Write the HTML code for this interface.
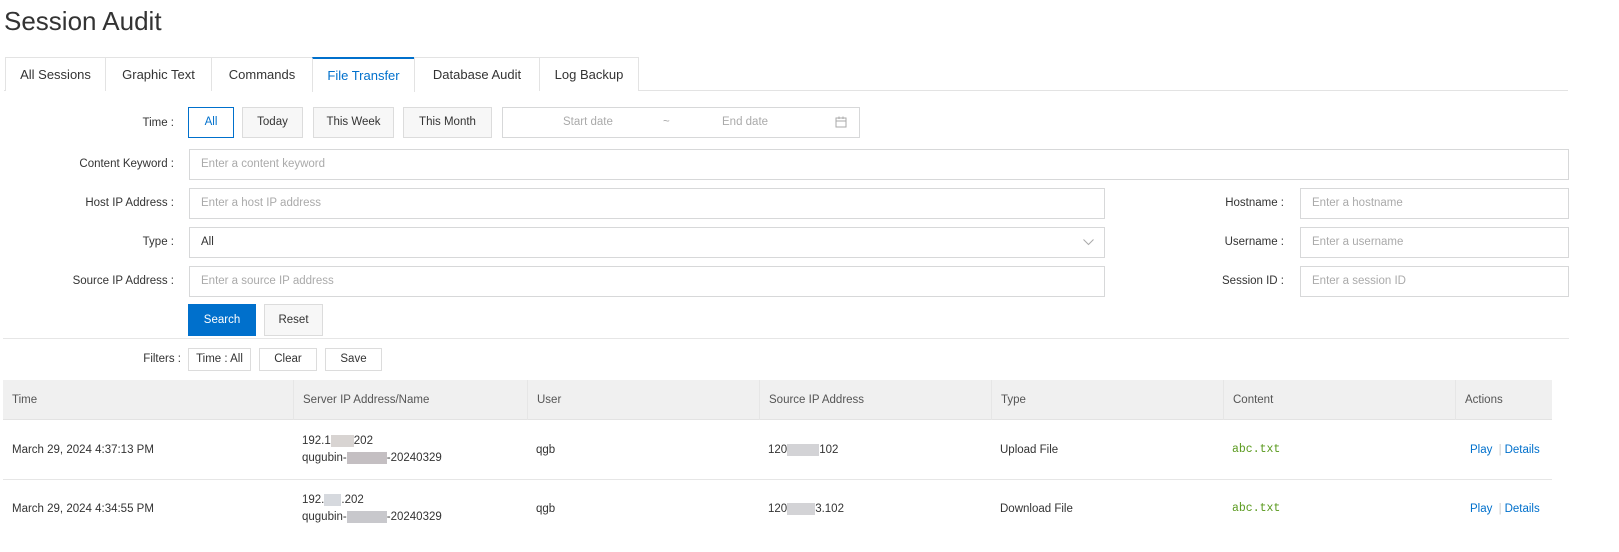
<!DOCTYPE html>
<html><head><meta charset="utf-8"><style>
*{box-sizing:border-box;margin:0;padding:0}
body{width:1619px;height:552px;background:#fff;font-family:"Liberation Sans",sans-serif;font-size:11.5px;color:#333;position:relative;overflow:hidden}
.a{position:absolute}
.lbl{position:absolute;text-align:right;color:#333;font-size:11.5px}
.btn{position:absolute;border:1px solid #dcdcdc;background:#f7f7f7;text-align:center;font-size:11.5px;color:#333}
.inp{position:absolute;border:1px solid #d7d8d9;background:#fff;color:#aaa;font-size:11.5px;padding-left:11px}
.tab{position:absolute;top:57px;height:34px;border:1px solid #e3e3e3;border-bottom:none;line-height:34px;text-align:center;font-size:13px;color:#333;background:#fff}
.th{position:absolute;top:380px;height:40px;line-height:40px;color:#555;padding-left:9px;border-left:1px solid #e6e6e6}
.td{position:absolute;color:#333}
.blur{display:inline-block;height:12px;vertical-align:middle;background:#cfcfd2}
</style></head><body>
<div class="a" style="left:4px;top:6px;font-size:26px;color:#333">Session Audit</div>
<div class="a" style="left:4px;top:90px;width:1564px;height:1px;background:#e3e3e3"></div>
<div class="tab" style="left:5px;width:101px">All Sessions</div>
<div class="tab" style="left:105px;width:107px">Graphic Text</div>
<div class="tab" style="left:211px;width:102px">Commands</div>
<div class="tab" style="left:312px;width:103px;border-top:2px solid #0070cc;color:#0070cc;height:35px">File Transfer</div>
<div class="tab" style="left:414px;width:126px">Database Audit</div>
<div class="tab" style="left:539px;width:100px">Log Backup</div>

<div class="lbl" style="left:0;width:174px;top:117px">Time :</div>
<div class="btn" style="left:188px;top:107px;width:46px;height:31px;line-height:29px;border-color:#0070cc;background:#fff;color:#0070cc">All</div>
<div class="btn" style="left:242px;top:107px;width:61px;height:31px;line-height:29px">Today</div>
<div class="btn" style="left:313px;top:107px;width:81px;height:31px;line-height:29px">This Week</div>
<div class="btn" style="left:403px;top:107px;width:89px;height:31px;line-height:29px">This Month</div>
<div class="inp" style="left:502px;top:107px;width:358px;height:31px;line-height:29px;padding:0">
<span class="a" style="left:60px">Start date</span><span class="a" style="left:160px">~</span><span class="a" style="left:219px">End date</span>
<svg class="a" style="left:332px;top:8px" width="12" height="12" viewBox="0 0 12 12"><rect x="1" y="2" width="10" height="9" fill="none" stroke="#aaa"/><line x1="1" y1="5" x2="11" y2="5" stroke="#aaa"/><line x1="4" y1="0.5" x2="4" y2="3" stroke="#aaa"/><line x1="8" y1="0.5" x2="8" y2="3" stroke="#aaa"/></svg></div>

<div class="lbl" style="left:0;width:174px;top:158px">Content Keyword :</div>
<div class="inp" style="left:189px;top:149px;width:1380px;height:31px;line-height:29px">Enter a content keyword</div>

<div class="lbl" style="left:0;width:174px;top:197px">Host IP Address :</div>
<div class="inp" style="left:189px;top:188px;width:916px;height:31px;line-height:29px">Enter a host IP address</div>
<div class="lbl" style="left:1150px;width:134px;top:197px">Hostname :</div>
<div class="inp" style="left:1300px;top:188px;width:269px;height:31px;line-height:29px">Enter a hostname</div>

<div class="lbl" style="left:0;width:174px;top:236px">Type :</div>
<div class="inp" style="left:189px;top:227px;width:916px;height:31px;line-height:29px;color:#333">All
<svg class="a" style="left:893px;top:11px" width="11" height="7" viewBox="0 0 11 7"><polyline points="0.5,0.5 5.5,5.5 10.5,0.5" fill="none" stroke="#aaa"/></svg></div>
<div class="lbl" style="left:1150px;width:134px;top:236px">Username :</div>
<div class="inp" style="left:1300px;top:227px;width:269px;height:31px;line-height:29px">Enter a username</div>

<div class="lbl" style="left:0;width:174px;top:275px">Source IP Address :</div>
<div class="inp" style="left:189px;top:266px;width:916px;height:31px;line-height:29px">Enter a source IP address</div>
<div class="lbl" style="left:1150px;width:134px;top:275px">Session ID :</div>
<div class="inp" style="left:1300px;top:266px;width:269px;height:31px;line-height:29px">Enter a session ID</div>

<div class="btn" style="left:188px;top:304px;width:68px;height:32px;line-height:32px;background:#0070cc;border:none;color:#fff">Search</div>
<div class="btn" style="left:264px;top:304px;width:59px;height:32px;line-height:30px">Reset</div>
<div class="a" style="left:3px;top:338px;width:1566px;height:1px;background:#e6e6e6"></div>

<div class="lbl" style="left:0;width:181px;top:353px">Filters :</div>
<div class="btn" style="left:188px;top:348px;width:63px;height:23px;line-height:21px;background:#fff">Time : All</div>
<div class="btn" style="left:259px;top:348px;width:58px;height:23px;line-height:21px;background:#fff">Clear</div>
<div class="btn" style="left:325px;top:348px;width:57px;height:23px;line-height:21px;background:#fff">Save</div>

<div class="a" style="left:3px;top:380px;width:1549px;height:40px;background:#f0f0f0;border-bottom:1px solid #e3e3e3"></div>
<div class="th" style="left:3px;border:none">Time</div>
<div class="th" style="left:293px">Server IP Address/Name</div>
<div class="th" style="left:527px">User</div>
<div class="th" style="left:759px">Source IP Address</div>
<div class="th" style="left:991px">Type</div>
<div class="th" style="left:1223px">Content</div>
<div class="th" style="left:1455px">Actions</div>
<div class="a" style="left:3px;top:479px;width:1549px;height:1px;background:#e6e6e6"></div>

<div class="td" style="left:12px;top:444px">March 29, 2024 4:37:13 PM</div>
<div class="td" style="left:302px;top:433px;line-height:17px">192.1<span class="blur" style="width:23px;background:#d8d4d2"></span>202<br>qugubin-<span class="blur" style="width:40px;background:#c4bfc2"></span>-20240329</div>
<div class="td" style="left:536px;top:444px">qgb</div>
<div class="td" style="left:768px;top:444px">120<span class="blur" style="width:32px;background:#d3d3d6"></span>102</div>
<div class="td" style="left:1000px;top:444px">Upload File</div>
<div class="td" style="left:1232px;top:443px;font-family:'Liberation Mono',monospace;color:#5a9a1e">abc.txt</div>
<div class="td" style="left:1470px;top:444px;color:#0070cc">Play <span style="color:#ccc;margin:0 3px">|</span>Details</div>

<div class="td" style="left:12px;top:503px">March 29, 2024 4:34:55 PM</div>
<div class="td" style="left:302px;top:492px;line-height:17px">192.<span class="blur" style="width:17px;background:#d6d9de"></span>.202<br>qugubin-<span class="blur" style="width:40px;background:#c8c8cc"></span>-20240329</div>
<div class="td" style="left:536px;top:503px">qgb</div>
<div class="td" style="left:768px;top:503px">120<span class="blur" style="width:28px;background:#d3d3d6"></span>3.102</div>
<div class="td" style="left:1000px;top:503px">Download File</div>
<div class="td" style="left:1232px;top:502px;font-family:'Liberation Mono',monospace;color:#5a9a1e">abc.txt</div>
<div class="td" style="left:1470px;top:503px;color:#0070cc">Play <span style="color:#ccc;margin:0 3px">|</span>Details</div>
</body></html>
